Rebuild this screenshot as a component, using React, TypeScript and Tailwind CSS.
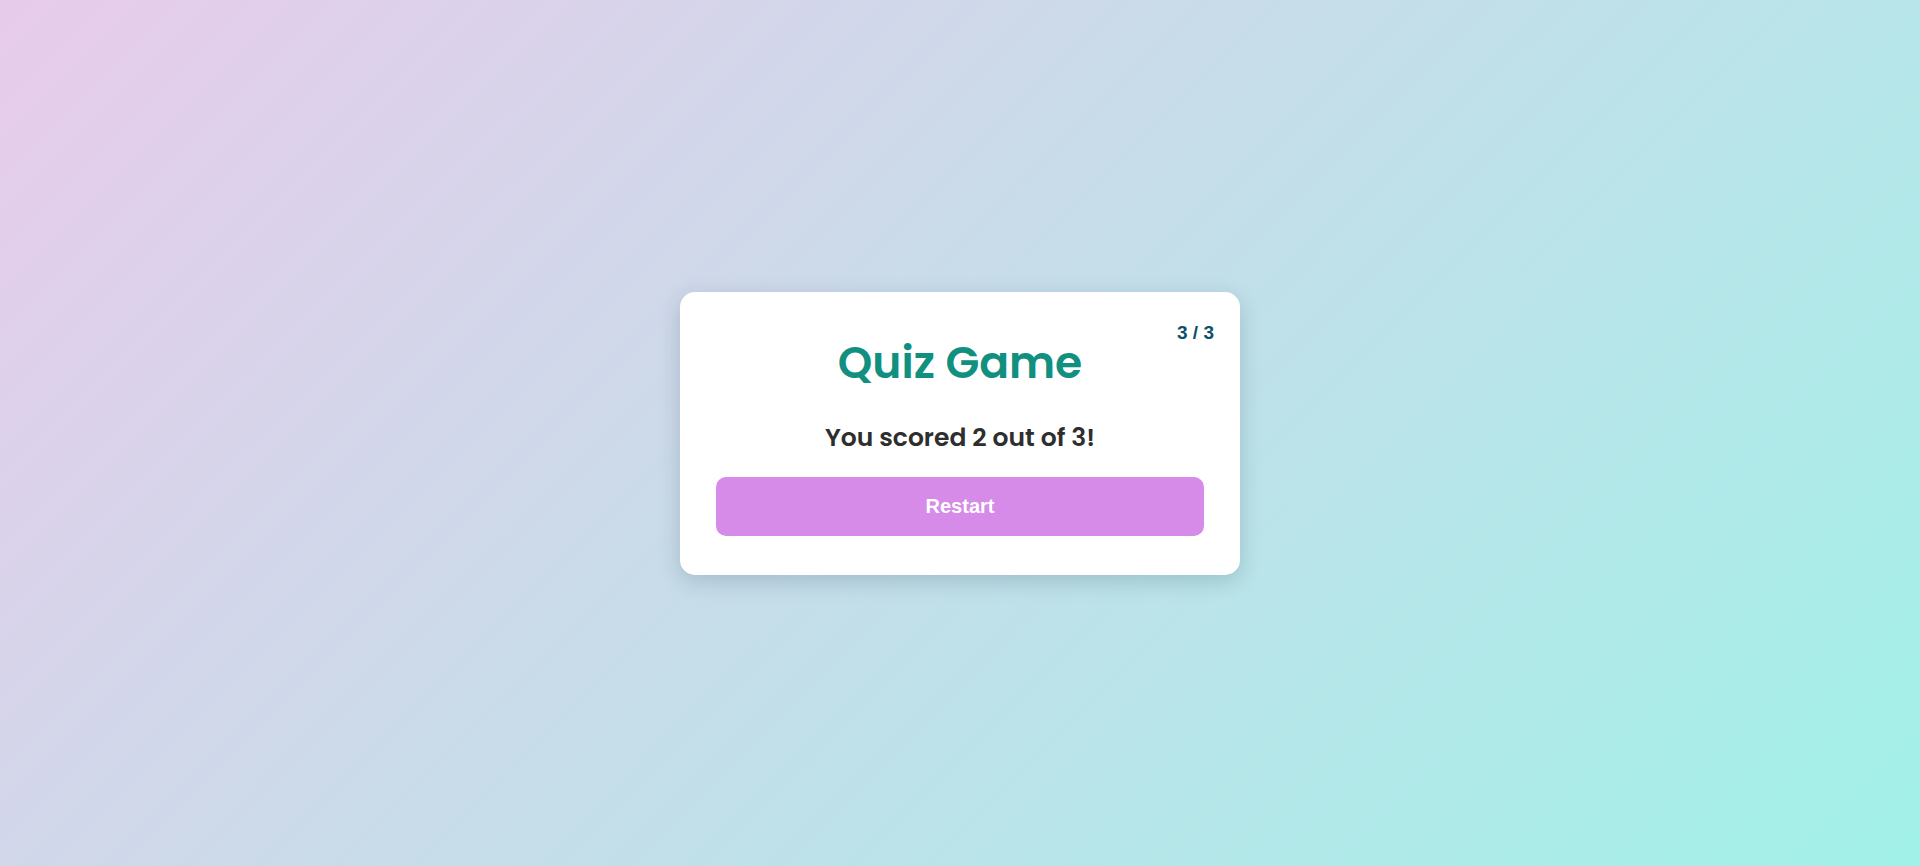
export default function App() {
  return (
    <div className="flex min-h-[866px] w-full items-center justify-center bg-[linear-gradient(135deg,#e8cbeb,#a1f1e8)]">
      <div className="relative flex w-[560px] flex-col items-center rounded-[15px] bg-white px-[36px] pt-[44px] pb-[39px] shadow-[0_6px_22px_rgba(0,40,60,0.18)]">
        <span className="absolute top-[30px] right-[26px] font-['Liberation_Sans',Arial,sans-serif] text-[19px] font-bold leading-[22px] text-[#0e4f6b]">
          3 / 3
        </span>
        <h1 className="font-['Poppins','Inter',sans-serif] text-[44px] leading-[53px] font-semibold text-[#11907f]">
          Quiz Game
        </h1>
        <p className="mt-[31px] font-['Poppins','Inter',sans-serif] text-[25px] leading-[36px] font-semibold text-[#2e2e2e]">
          You scored 2 out of 3!
        </p>
        <button className="mt-[21px] h-[59px] w-full rounded-[10px] bg-[#d68be9] font-['Liberation_Sans',Arial,sans-serif] text-[20px] font-bold text-white">
          Restart
        </button>
      </div>
    </div>
  );
}
